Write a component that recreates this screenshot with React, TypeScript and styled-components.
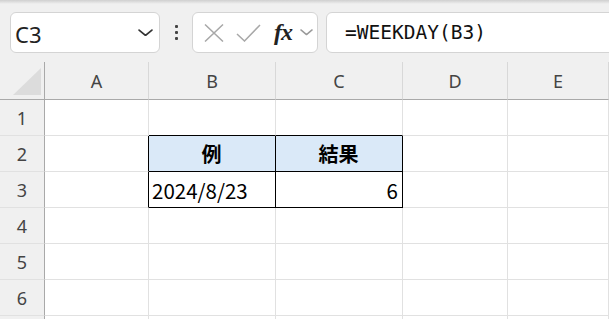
import React from 'react'
import styled, { createGlobalStyle, css } from 'styled-components'

const PAGE_GREY = '#f0f0f0'
const GRID_LINE = '#e1e1e1'
const HEADER_LINE = '#a9a9a9'
const TABLE_BLUE = '#dae9f8'
const UI_FONT = '"Noto Sans", "Noto Sans CJK JP", sans-serif'
const CELL_FONT = '"Noto Sans CJK JP", "Noto Sans", sans-serif'

const GlobalStyle = createGlobalStyle`
  html, body {
    margin: 0;
    padding: 0;
    background: ${PAGE_GREY};
    overflow: hidden;
  }
`

const Page = styled.div`
  width: 609px;
  height: 319px;
  overflow: hidden;
  background: ${PAGE_GREY};
`

const TopShadow = styled.div`
  height: 4px;
  background: linear-gradient(#cfcfcf, ${PAGE_GREY});
`

const Toolbar = styled.div`
  display: flex;
  align-items: center;
  height: 41px;
  margin-top: 8px;
  padding-left: 10px;
`

const BoxCss = css`
  box-sizing: border-box;
  height: 41px;
  background: #fff;
  border: 1px solid #d4d4d4;
  border-radius: 6px;
  display: flex;
  align-items: center;
`

const NameBox = styled.div`
  ${BoxCss}
  width: 150px;
  padding: 0 6px 0 4px;
  justify-content: space-between;
  font-family: ${UI_FONT};
  font-size: 22px;
  color: #222;

  span {
    margin-top: 3px;
  }
`

const MoreDots = styled.div`
  width: 32px;
  display: flex;
  flex-direction: column;
  align-items: center;
  gap: 3px;

  span {
    width: 3px;
    height: 3px;
    border-radius: 1px;
    background: #444;
  }
`

const FormulaButtons = styled.div`
  ${BoxCss}
  width: 126px;
  padding-left: 7px;
`

const IconSlot = styled.div<{ $w: number }>`
  width: ${(p) => p.$w}px;
  display: flex;
  align-items: center;
  justify-content: center;
`

const Fx = styled.span`
  font-family: "Liberation Serif", serif;
  font-style: italic;
  font-weight: 700;
  font-size: 24px;
  color: #222;
  letter-spacing: -1px;
`

const FormulaBar = styled.div`
  ${BoxCss}
  flex: 1;
  margin-left: 8px;
  margin-right: -12px;
  padding-left: 18px;
  font-family: "DejaVu Sans Mono", "Liberation Mono", monospace;
  font-size: 19.5px;
  color: #111;
`

const Sheet = styled.div`
  margin-top: 9px;
  display: grid;
  grid-template-columns: 45px 104px 127px 127px 105px 1fr;
  grid-template-rows: 38px;
  grid-auto-rows: 36px;
`

const Corner = styled.div`
  box-sizing: border-box;
  position: relative;
  border-right: 1px solid ${HEADER_LINE};
  border-bottom: 1px solid ${HEADER_LINE};

  &::after {
    content: '';
    position: absolute;
    left: 13px;
    top: 6px;
    width: 28px;
    height: 27px;
    background: #dcdcdc;
    clip-path: polygon(100% 0, 100% 100%, 0 100%);
  }
`

const ColHeader = styled.div`
  box-sizing: border-box;
  display: flex;
  align-items: center;
  justify-content: center;
  border-right: 1px solid #d8d8d8;
  border-bottom: 1px solid ${HEADER_LINE};
  font-family: ${UI_FONT};
  font-size: 18px;
  color: #444;
`

const RowHeader = styled.div`
  box-sizing: border-box;
  display: flex;
  align-items: center;
  justify-content: center;
  border-right: 1px solid ${HEADER_LINE};
  border-bottom: 1px solid ${GRID_LINE};
  font-family: ${UI_FONT};
  font-size: 18px;
  color: #444;
`

const Cell = styled.div<CellProps>`
  box-sizing: border-box;
  display: flex;
  align-items: center;
  justify-content: ${(p) => (p.$align === 'center' ? 'center' : p.$align === 'right' ? 'flex-end' : 'flex-start')};
  padding: 0 4px 0 3px;
  background: ${(p) => (p.$fill ? TABLE_BLUE : '#fff')};
  border-right: 1px solid ${(p) => (p.$darkRight ? '#000' : GRID_LINE)};
  border-bottom: 1px solid ${(p) => (p.$darkBottom ? '#000' : GRID_LINE)};
  font-family: ${CELL_FONT};
  font-size: ${(p) => (p.$bold ? 20 : 20.5)}px;
  font-weight: ${(p) => (p.$bold ? 700 : 400)};
  color: #000;
  white-space: nowrap;
`

interface CellProps {
  $align?: 'left' | 'center' | 'right'
  $fill?: boolean
  $bold?: boolean
  $darkRight?: boolean
  $darkBottom?: boolean
}

interface CellData extends CellProps {
  text?: string
}

const columns = ['A', 'B', 'C', 'D', 'E']

// B2:C3 is the bordered table
const cellAt = (row: number, col: number): CellData => {
  const inTable = (row === 2 || row === 3) && (col === 1 || col === 2)
  const data: CellData = {}
  if (inTable) {
    data.$darkRight = true
    data.$darkBottom = true
  }
  if (row === 1 && (col === 1 || col === 2)) data.$darkBottom = true
  if ((row === 2 || row === 3) && col === 0) data.$darkRight = true
  if (row === 2 && col === 1) Object.assign(data, { text: '例', $fill: true, $bold: true, $align: 'center' })
  if (row === 2 && col === 2) Object.assign(data, { text: '結果', $fill: true, $bold: true, $align: 'center' })
  if (row === 3 && col === 1) Object.assign(data, { text: '2024/8/23', $align: 'left' })
  if (row === 3 && col === 2) Object.assign(data, { text: '6', $align: 'right' })
  return data
}

const Chevron: React.FC<{ size: number; color: string }> = ({ size, color }) => (
  <svg width={size} height={size * 0.5} viewBox='0 0 14 7' fill='none'>
    <path d='M1 1 L7 6 L13 1' stroke={color} strokeWidth='1.6' strokeLinecap='round' strokeLinejoin='round' />
  </svg>
)

const App: React.FC = () => {
  // row 7 only peeks in at the bottom edge, its label is out of view
  const rows = [1, 2, 3, 4, 5, 6, 7]

  return (
    <Page>
      <GlobalStyle />
      <TopShadow />
      <Toolbar>
        <NameBox>
          <span>C3</span>
          <Chevron size={15} color='#333' />
        </NameBox>
        <MoreDots>
          <span />
          <span />
          <span />
        </MoreDots>
        <FormulaButtons>
          <IconSlot $w={28}>
            <svg width='20' height='18' viewBox='0 0 20 18'>
              <path d='M1 0.5 L19 17.5 M19 0.5 L1 17.5' stroke='#a8a8a8' strokeWidth='1.5' />
            </svg>
          </IconSlot>
          <IconSlot $w={40}>
            <svg width='25' height='18' viewBox='0 0 25 18'>
              <path d='M1 10 L8.5 17 L24 1' stroke='#a8a8a8' strokeWidth='1.5' fill='none' />
            </svg>
          </IconSlot>
          <IconSlot $w={30}>
            <Fx>fx</Fx>
          </IconSlot>
          <IconSlot $w={16}>
            <Chevron size={13} color='#9a9a9a' />
          </IconSlot>
        </FormulaButtons>
        <FormulaBar>=WEEKDAY(B3)</FormulaBar>
      </Toolbar>
      <Sheet>
        <Corner />
        {columns.map((c) => (
          <ColHeader key={c}>{c}</ColHeader>
        ))}
        {rows.map((r) => (
          <React.Fragment key={r}>
            <RowHeader>{r < 7 ? r : ''}</RowHeader>
            {columns.map((_, ci) => {
              const { text, ...props } = cellAt(r, ci)
              return (
                <Cell key={ci} {...props}>
                  {text}
                </Cell>
              )
            })}
          </React.Fragment>
        ))}
      </Sheet>
    </Page>
  )
}

export default App
